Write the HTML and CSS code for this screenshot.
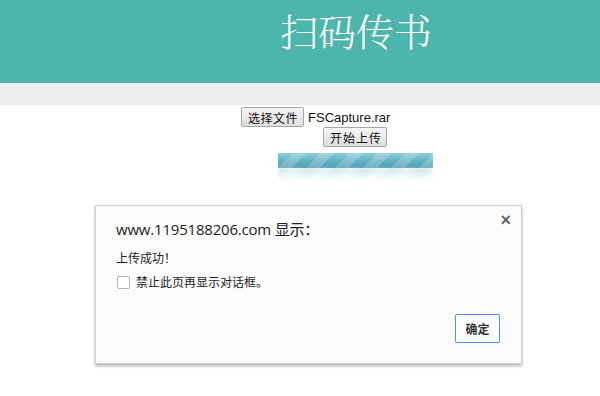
FILE: index.html
```html
<!DOCTYPE html>
<html>
<head>
<meta charset="utf-8">
<link rel="stylesheet" href="styles.css">
</head>
<body>
<header class="header"><h1 class="title">扫码传书</h1></header>
<div class="band"></div>
<main class="upload">
  <div class="file-row">
    <button class="btn">选择文件</button><span class="file-name">FSCapture.rar</span>
  </div>
  <div class="start-row"><button class="btn">开始上传</button></div>
  <div class="progress-wrap">
    <div class="progress"></div>
    <div class="reflection"></div>
  </div>
</main>
<div class="dialog">
  <div class="dialog-title">www.1195188206.com 显示：</div>
  <span class="close">×</span>
  <div class="msg">上传成功！</div>
  <label class="check"><span class="box"></span>禁止此页再显示对话框。</label>
  <div class="actions"><button class="ok">确定</button></div>
</div>
</body>
</html>
```
FILE: styles.css
```css
html, body { margin: 0; padding: 0; background: #fff; }
body { font-family: "Liberation Sans", "Noto Sans CJK SC", sans-serif; position: relative; width: 600px; height: 396px; overflow: hidden; }
.header { height: 83px; background: #4db6ac; box-sizing: border-box; padding-left: 280px; padding-top: 6px; }
.title { margin: 0; font-family: "Noto Serif CJK SC", "Noto Sans CJK SC", serif; font-weight: 300; font-size: 38px; line-height: 48px; color: #fff; letter-spacing: 0; }
.band { height: 22px; background: #ededed; }
.upload { padding-top: 2px; }
.file-row { display: flex; align-items: center; padding-left: 241px; height: 20px; }
.btn { font-family: "Noto Sans CJK SC", sans-serif; font-size: 12px; line-height: 15px; height: 20px; padding: 0 5px 0 6px; border: 1px solid #a6a6a6; border-radius: 2px; background: linear-gradient(#f6f6f6, #dedede); color: #111; letter-spacing: 0.5px; }
.start-row .btn { letter-spacing: 1px; padding: 0 4px 0 6px; }
.file-name { font-size: 13px; margin-left: 4px; color: #111; }
.start-row { padding-left: 323px; margin-top: 0; height: 20px; }
.progress-wrap { padding-left: 278px; margin-top: 6px; }
.progress { width: 155px; height: 15px; background:
  repeating-linear-gradient(-45deg, rgba(255,255,255,0.2) 0 10px, rgba(255,255,255,0) 10px 20px),
  linear-gradient(#8dcfda, #62b3c3 50%, #4f9fb1); }
.reflection { width: 155px; height: 13px; background:
  repeating-linear-gradient(-45deg, rgba(255,255,255,0.35) 0 10px, rgba(255,255,255,0) 10px 20px),
  linear-gradient(rgba(110,185,200,0.35), rgba(255,255,255,0)); filter: blur(1.5px); }
.dialog { position: absolute; left: 95px; top: 205px; width: 427px; height: 159px; box-sizing: border-box; border: 1px solid #cfcfcf; background: #fbfbfb; box-shadow: 0 2px 3px rgba(0,0,0,0.3); padding: 13px 20px 0 20px; font-family: "Noto Sans CJK SC", sans-serif; color: #222; }
.dialog-title { font-family: "Open Sans", "Noto Sans CJK SC", sans-serif; font-size: 15px; line-height: 20px; letter-spacing: -0.2px; }
.close { position: absolute; right: 10px; top: 4px; font-size: 18px; font-weight: bold; color: #666; font-family: "Liberation Sans", sans-serif; }
.msg { font-size: 12px; margin-top: 11px; line-height: 16px; }
.check { display: flex; align-items: center; font-size: 12px; margin-top: 8px; line-height: 16px; }
.box { width: 11px; height: 11px; border: 1px solid #b5b5b5; border-radius: 2px; background: #fff; margin: 0 6px 0 1px; }
.actions { display: flex; justify-content: flex-end; margin-top: 24px; margin-right: 1px; }
.ok { font-family: "Noto Sans CJK SC", sans-serif; font-weight: bold; font-size: 12px; width: 45px; height: 29px; border: 1px solid #4d90fe; border-radius: 2px; background: #fff; color: #333; padding: 0; }
```
